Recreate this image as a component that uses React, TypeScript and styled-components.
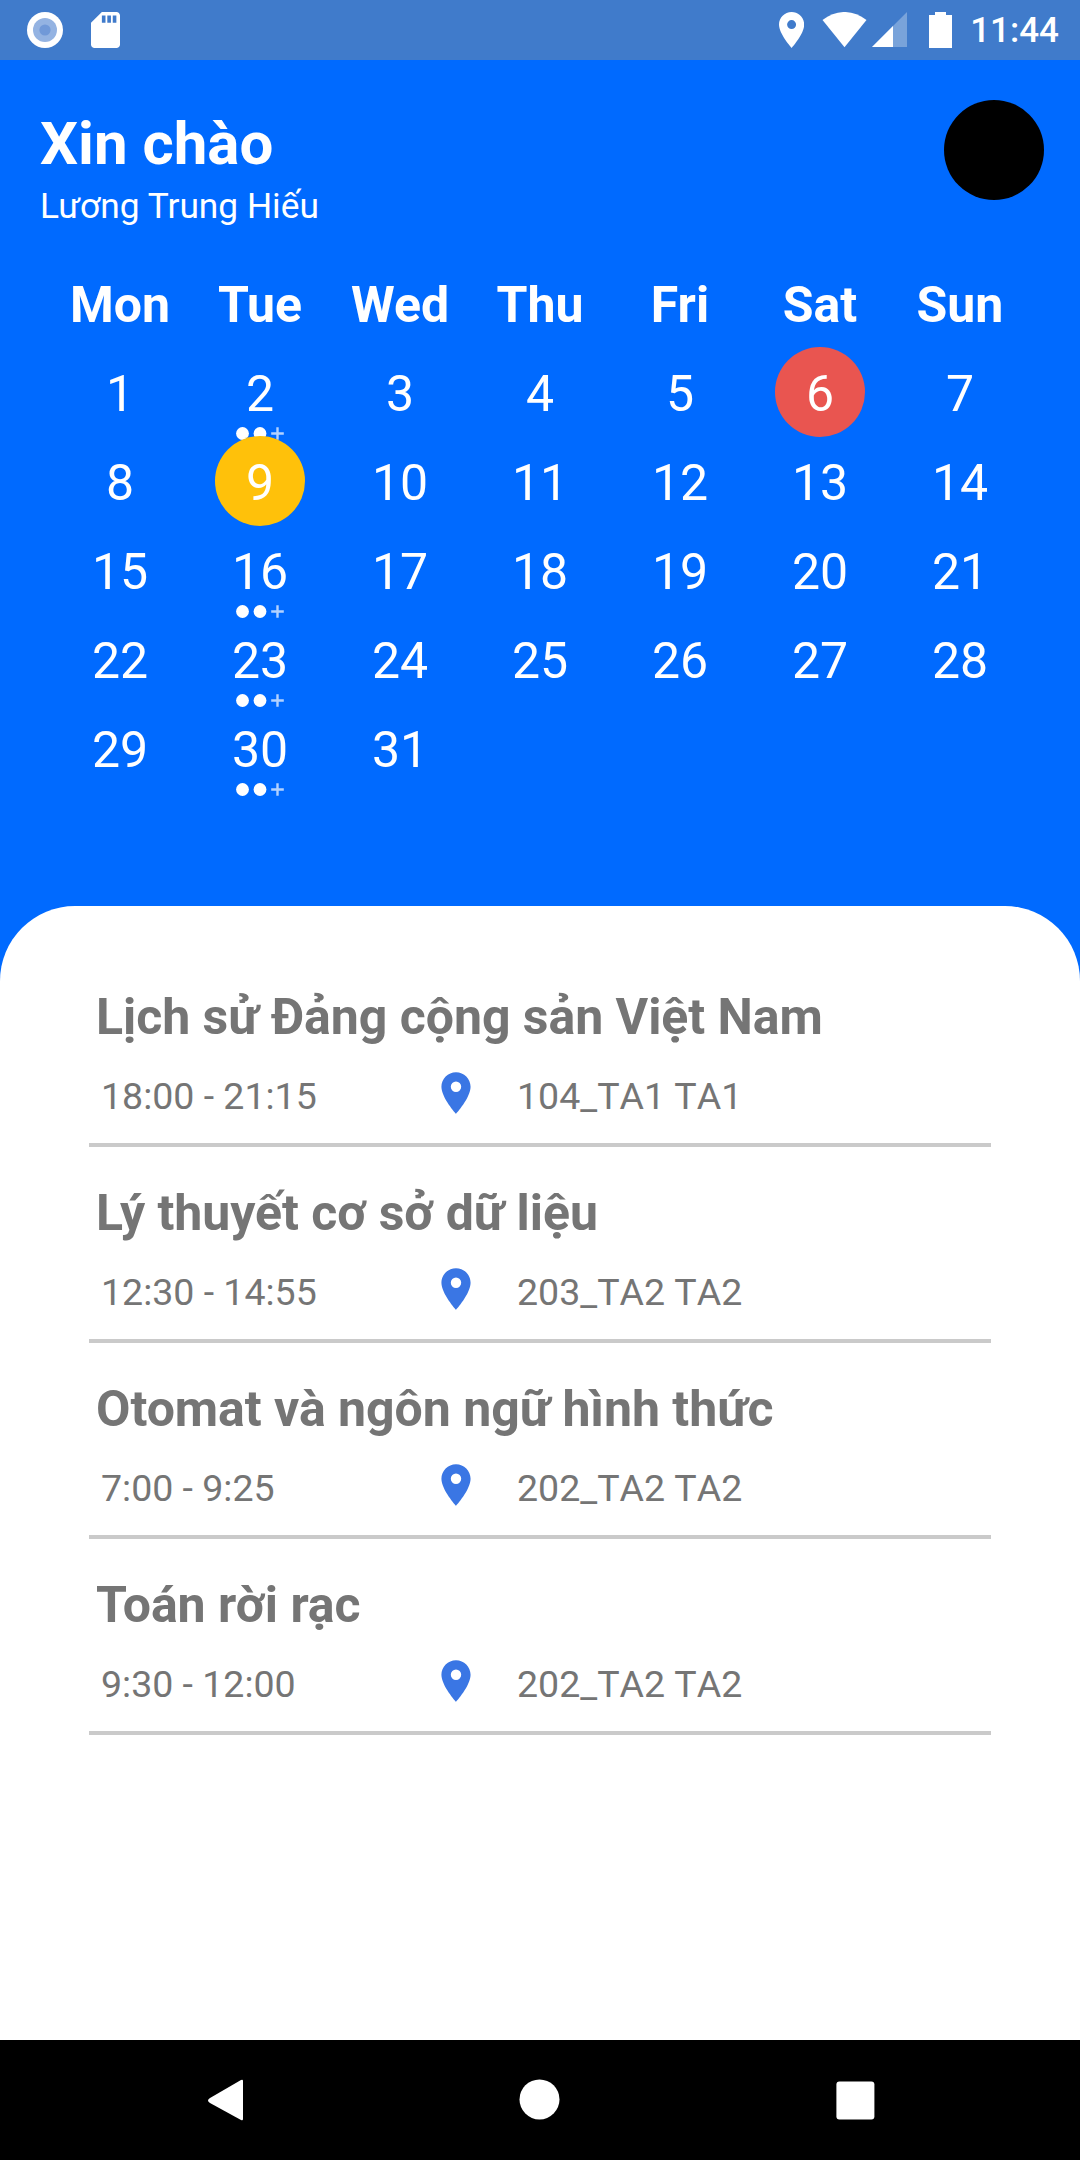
import React from "react";
import styled, { createGlobalStyle } from "styled-components";

const GlobalStyle = createGlobalStyle`
  *, *::before, *::after { box-sizing: border-box; }
  body { margin: 0; background: #006aff; }
`;

const Screen = styled.div`
  width: 1080px;
  height: 2160px;
  display: flex;
  flex-direction: column;
  overflow: hidden;
  background: #006aff;
  color: #fff;
  font-family: Roboto, "Noto Sans", sans-serif;
`;

const StatusBar = styled.header`
  flex: none;
  height: 60px;
  padding: 0 21px 0 27px;
  display: flex;
  align-items: center;
  justify-content: space-between;
  background: #407bcb;
`;

const StatusGroup = styled.div`
  display: flex;
  align-items: center;
`;

const StatusIcon = styled.svg<{ $gap?: number }>`
  display: block;
  flex: none;
  margin-right: ${(p) => p.$gap ?? 0}px;
  fill: #fff;
`;

const Clock = styled.time`
  width: 87px;
  padding-top: 2px;
  font-size: 35px;
  font-weight: 500;
  line-height: 60px;
  display: flex;
  justify-content: flex-end;
`;

const Greeting = styled.section`
  flex: none;
  height: 203px;
  padding: 40px 36px 0 40px;
  display: flex;
  justify-content: space-between;
  align-items: flex-start;
`;

const Hello = styled.h1`
  margin: 9px 0 0;
  font-size: 60px;
  line-height: 70px;
  font-weight: 700;
`;

const UserName = styled.p`
  margin: 6px 0 0;
  font-size: 35.3px;
  line-height: 42px;
`;

const Avatar = styled.div`
  width: 100px;
  height: 100px;
  border-radius: 50%;
  background: #000;
`;

const Calendar = styled.section`
  flex: none;
  height: 643px;
  padding: 0 50px;
`;

const Week = styled.div`
  display: grid;
  grid-template-columns: repeat(7, 140px);
`;

const WeekDay = styled.div`
  height: 84px;
  font-size: 50px;
  font-weight: 700;
  line-height: 84px;
  text-align: center;
`;

const DayCell = styled.div`
  position: relative;
  height: 89px;
  display: flex;
  justify-content: center;
`;

const DayNumber = styled.span<{ $fill?: string }>`
  flex: none;
  width: 90px;
  height: 90px;
  border-radius: 50%;
  background: ${(p) => p.$fill ?? "transparent"};
  font-size: 50px;
  line-height: 94px;
  text-align: center;
`;

const EventMarks = styled.svg`
  position: absolute;
  left: 46px;
  top: 80px;
`;

const Sheet = styled.main`
  flex: 1;
  padding: 60px 89px 0;
  border-radius: 75px 75px 0 0;
  background: #fff;
  color: #757575;
`;

const Lesson = styled.article`
  height: 196px;
  padding-top: 15px;
  display: flex;
  flex-direction: column;
`;

const LessonTitle = styled.h2`
  margin: 0;
  padding: 6px 0 0 7px;
  font-size: 50px;
  line-height: 60px;
  font-weight: 700;
  letter-spacing: -0.04px;
  white-space: nowrap;
`;

const LessonInfo = styled.div`
  height: 81px;
  padding-left: 12px;
  display: grid;
  grid-template-columns: 330px 86px 1fr;
  align-items: start;
  font-size: 37.5px;
  line-height: 44px;
`;

const InfoText = styled.span`
  padding-top: 27px;
  font-kerning: none;
`;

const Divider = styled.hr`
  width: 100%;
  height: 4px;
  margin: 15px 0 0;
  border: 0;
  background: #cacaca;
`;

const PinIcon = styled.svg`
  display: block;
  margin-top: 21px;
  fill: #3a76e4;
`;

const NavBar = styled.nav`
  flex: none;
  height: 120px;
  padding: 0 200px;
  display: flex;
  align-items: center;
  justify-content: space-between;
  background: #000;
`;

const NavIcon = styled.svg`
  display: block;
  fill: #fff;
`;

const PIN_PATH =
  "M12 2C8.13 2 5 5.13 5 9c0 5.25 7 13 7 13s7-7.75 7-13c0-3.87-3.13-7-7-7zm0 9.5a2.5 2.5 0 0 1 0-5 2.5 2.5 0 0 1 0 5z";

const WEEKDAYS = ["Mon", "Tue", "Wed", "Thu", "Fri", "Sat", "Sun"];
const DAYS = Array.from({ length: 31 }, (_, i) => i + 1);
const BUSY_DAYS = [2, 16, 23, 30];
const DAY_FILL: Record<number, string> = { 6: "#e95550", 9: "#ffc10a" };

const LESSONS = [
  { title: "Lịch sử Đảng cộng sản Việt Nam", time: "18:00 - 21:15", room: "104_TA1 TA1" },
  { title: "Lý thuyết cơ sở dữ liệu", time: "12:30 - 14:55", room: "203_TA2 TA2" },
  { title: "Otomat và ngôn ngữ hình thức", time: "7:00 - 9:25", room: "202_TA2 TA2" },
  { title: "Toán rời rạc", time: "9:30 - 12:00", room: "202_TA2 TA2" },
];

function Day({ day }: { day: number }) {
  return (
    <DayCell>
      <DayNumber $fill={DAY_FILL[day]}>{day}</DayNumber>
      {BUSY_DAYS.includes(day) && (
        <EventMarks width="48" height="13" viewBox="0 0 48 13">
          <circle cx="6.5" cy="6.5" r="6.4" fill="#fff" />
          <circle cx="24" cy="6.5" r="6.4" fill="#fff" />
          <path d="M35.2 6.5h12.6M41.5 .2v12.6" stroke="#b3d2ff" strokeWidth="2.4" />
        </EventMarks>
      )}
    </DayCell>
  );
}

export default function App() {
  return (
    <Screen>
      <GlobalStyle />
      <StatusBar>
        <StatusGroup>
          <StatusIcon width="36" height="36" viewBox="0 0 36 36" $gap={27.5}>
            <circle cx="18" cy="18" r="18" />
            <circle cx="18" cy="18" r="12" fill="#94b3e2" />
            <circle cx="18" cy="18" r="5.6" fill="#7199d8" />
          </StatusIcon>
          <StatusIcon width="29" height="36" viewBox="4 2 16 20" preserveAspectRatio="none">
            <path d="M18 2h-8L4 8v12c0 1.1.9 2 2 2h12c1.1 0 2-.9 2-2V4c0-1.1-.9-2-2-2zm-6 6h-2V4h2v4zm3 0h-2V4h2v4zm3 0h-2V4h2v4z" />
          </StatusIcon>
        </StatusGroup>
        <StatusGroup>
          <StatusIcon width="25.2" height="36" viewBox="5 2 14 20" $gap={18}>
            <path d={PIN_PATH} />
          </StatusIcon>
          <StatusIcon width="45" height="36" viewBox="0 0 45 36" $gap={5}>
            <path d="M.5 8C14-2.700 31-2.700 44.500 8L22.500 35.300z" />
          </StatusIcon>
          <StatusIcon width="35" height="36" viewBox="0 0 35 36" $gap={22}>
            <path d="M35 0v35H0z" fillOpacity=".3" />
            <path d="M21 14v21H0z" />
          </StatusIcon>
          <StatusIcon width="23" height="36" viewBox="0 0 23 36" $gap={20}>
            <path d="M6 0h11v3h6v33H0V3h6z" />
          </StatusIcon>
          <Clock>11:44</Clock>
        </StatusGroup>
      </StatusBar>

      <Greeting>
        <div>
          <Hello>Xin chào</Hello>
          <UserName>Lương Trung Hiếu</UserName>
        </div>
        <Avatar />
      </Greeting>

      <Calendar>
        <Week>
          {WEEKDAYS.map((name) => (
            <WeekDay key={name}>{name}</WeekDay>
          ))}
          {DAYS.map((day) => (
            <Day key={day} day={day} />
          ))}
        </Week>
      </Calendar>

      <Sheet>
        {LESSONS.map((lesson) => (
          <Lesson key={lesson.title}>
            <LessonTitle>{lesson.title}</LessonTitle>
            <LessonInfo>
              <InfoText>{lesson.time}</InfoText>
              <PinIcon width="50" height="50" viewBox="0 0 24 24">
                <path d={PIN_PATH} />
              </PinIcon>
              <InfoText>{lesson.room}</InfoText>
            </LessonInfo>
            <Divider />
          </Lesson>
        ))}
      </Sheet>

      <NavBar>
        <NavIcon width="50" height="50" viewBox="0 0 50 50">
          <path d="M41 5 10 23q-4 2.500 0 5L41 45q2 1 2-1V6q0-2-2-1z" />
        </NavIcon>
        <NavIcon width="50" height="50" viewBox="0 0 50 50">
          <circle cx="24.5" cy="24.4" r="20" />
        </NavIcon>
        <NavIcon width="50" height="50" viewBox="0 0 50 50">
          <rect x="6.4" y="6.4" width="38" height="38" rx="3" />
        </NavIcon>
      </NavBar>
    </Screen>
  );
}
